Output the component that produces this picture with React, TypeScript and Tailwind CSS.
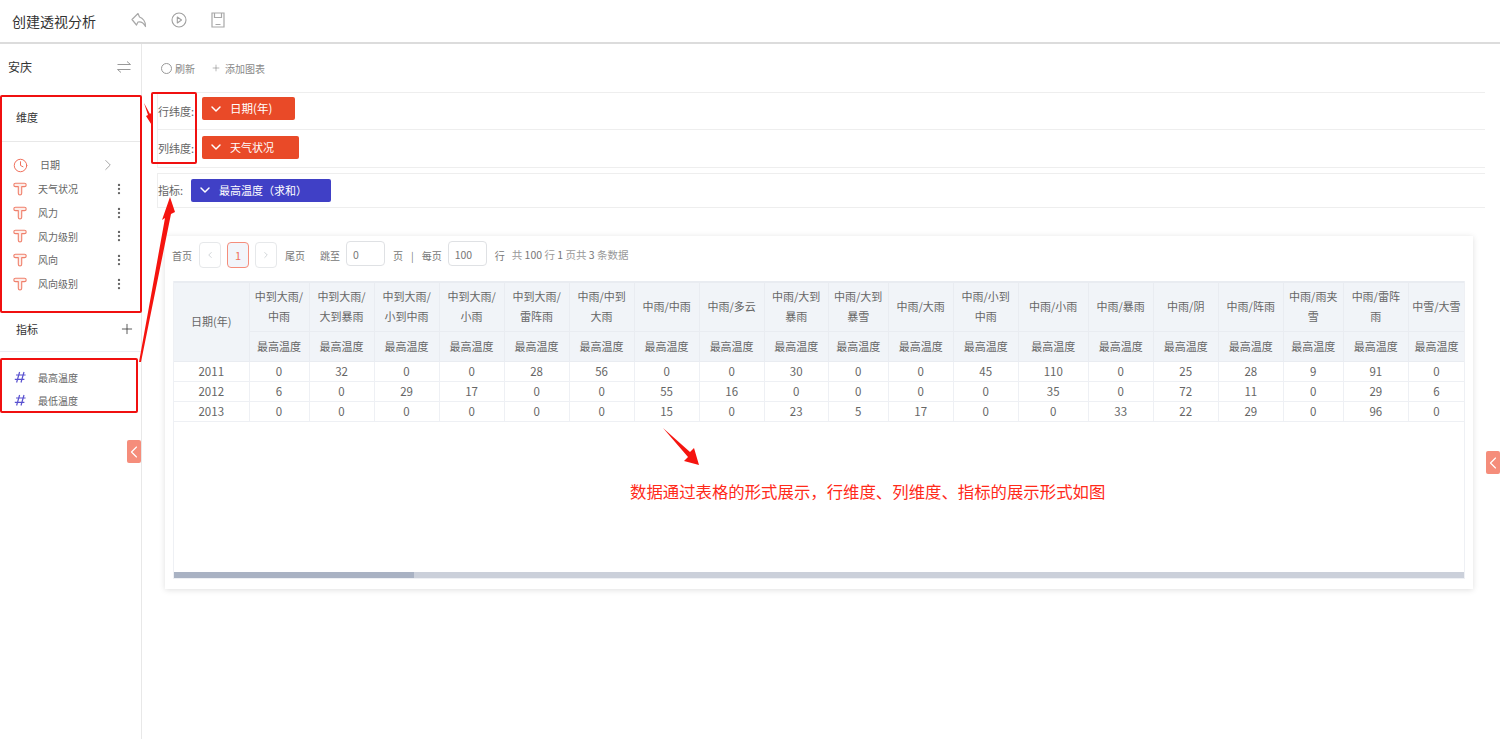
import React from 'react';
import { ChevronDown, ChevronLeft, ChevronRight, Clock, EllipsisVertical, Plus } from 'lucide-react';

const columns = [
    { name: ['中到大雨/', '中雨'], w: 60, v: [0, 6, 0] },
    { name: ['中到大雨/', '大到暴雨'], w: 65, v: [32, 0, 0] },
    { name: ['中到大雨/', '小到中雨'], w: 65, v: [0, 29, 0] },
    { name: ['中到大雨/', '小雨'], w: 65, v: [0, 17, 0] },
    { name: ['中到大雨/', '雷阵雨'], w: 65, v: [28, 0, 0] },
    { name: ['中雨/中到', '大雨'], w: 65, v: [56, 0, 0] },
    { name: ['中雨/中雨'], w: 65, v: [0, 55, 15] },
    { name: ['中雨/多云'], w: 65, v: [0, 16, 0] },
    { name: ['中雨/大到', '暴雨'], w: 64, v: [30, 0, 23] },
    { name: ['中雨/大到', '暴雪'], w: 60, v: [0, 0, 5] },
    { name: ['中雨/大雨'], w: 65, v: [0, 0, 17] },
    { name: ['中雨/小到', '中雨'], w: 65, v: [45, 0, 0] },
    { name: ['中雨/小雨'], w: 70, v: [110, 35, 0] },
    { name: ['中雨/暴雨'], w: 65, v: [0, 0, 33] },
    { name: ['中雨/阴'], w: 65, v: [25, 72, 22] },
    { name: ['中雨/阵雨'], w: 65, v: [28, 11, 29] },
    { name: ['中雨/雨夹', '雪'], w: 60, v: [9, 0, 0] },
    { name: ['中雨/雷阵', '雨'], w: 65, v: [91, 29, 96] },
    { name: ['中雪/大雪'], w: 56, v: [0, 6, 0] },
];

const dimensions = ['天气状况', '风力', '风力级别', '风向', '风向级别'];

const TextIcon = () => (
    <svg width="14" height="14" viewBox="0 0 14 14" fill="#fdeeea" stroke="#f0806c" strokeWidth="1.1" strokeLinejoin="round" className="shrink-0">
        <path d="M2.5 1.2 H11.5 A1.7 1.7 0 0 1 11.5 4.6 H8.7 V11.3 A1.7 1.7 0 0 1 5.3 11.3 V4.6 H2.5 A1.7 1.7 0 0 1 2.5 1.2 Z" />
    </svg>
);

const HashIcon = () => (
    <svg width="14" height="14" viewBox="0 0 14 14" fill="none" stroke="#5a52d0" strokeWidth="1.2" className="shrink-0">
        <path d="M6.6 2 L3.6 12.5 M11 2 L8 12.5 M3 5 H12.6 M1.8 9.3 H11.4" />
    </svg>
);

const Handle = ({ className }: { className: string }) => (
    <div className={`absolute w-[14px] h-[23px] bg-[#f58d7b] rounded-[2px] flex items-center justify-center ${className}`}>
        <ChevronLeft size={20} strokeWidth={1.4} className="text-white shrink-0" />
    </div>
);

const Tag = ({ label, color, width, size }: { label: string; color: string; width: string; size: string }) => (
    <div className={`h-[23px] rounded-[2px] flex items-center text-white ${size} ${color} ${width}`}>
        <ChevronDown size={16} strokeWidth={2.2} className="ml-[6px] mr-[6px] shrink-0" />
        <span>{label}</span>
    </div>
);

const PageButton = ({ children, active }: { children: React.ReactNode; active?: boolean }) => (
    <div className={`w-[22px] h-[26px] rounded-[4px] border flex items-center justify-center text-[11px] ${active ? 'border-[#f58d7b] bg-[#f2f5fa] text-[#f0705c]' : 'border-[#e6e8ea] text-[#c8ccd0]'}`}>
        {children}
    </div>
);

export default function App() {
    return (
        <div className="relative w-[1500px] h-[739px] overflow-hidden bg-white text-[#666] text-[10px]" style={{ fontFamily: '"Noto Sans CJK SC", "Noto Sans", sans-serif' }}>
            <header className="h-[44px] border-b-2 border-[#dcdcdc] flex items-center pl-[12px]">
                <h1 className="text-[14px] font-normal text-[#333] w-[119px]">创建透视分析</h1>
                <svg width="16" height="16" viewBox="0 0 16 16" fill="none" stroke="#a8a8a8" strokeWidth="1.2" strokeLinejoin="round" className="mb-[2px]">
                    <path d="M7 1.5 L1 7.5 L5.5 13 L7 10 C10 9.5 12.5 10.5 14.5 14.5 C15 9.5 11.5 6 8.5 5 Z" />
                </svg>
                <svg width="16" height="16" viewBox="0 0 16 16" fill="none" stroke="#a0a0a0" strokeWidth="1.1" strokeLinejoin="round" className="ml-[24px] mb-[2px]">
                    <circle cx="8" cy="8" r="7" />
                    <path d="M6.3 5 L10.5 8 L6.3 11 Z" />
                </svg>
                <svg width="14" height="16" viewBox="0 0 14 16" fill="none" stroke="#a8a8a8" strokeWidth="1.2" className="ml-[24px] mb-[2px]">
                    <path d="M1 1 H13 V15 H1 Z M3.5 1 V5.5 H10.5 V1 M4.5 12.5 H9.5" />
                </svg>
            </header>

            <div className="flex h-[695px]">
                <aside className="relative w-[142px] shrink-0 border-r border-[#e8e8e8]">
                    <div className="h-[46px] flex items-center justify-between pl-[8px] pr-[10px] text-[12px] text-[#333]">
                        <span>安庆</span>
                        <svg width="14" height="12" viewBox="0 0 14 12" fill="none" stroke="#999" strokeWidth="1">
                            <path d="M0.5 3.5 H13.5 L10 0.5 M13.5 8.5 H0.5 L4 11.5" />
                        </svg>
                    </div>
                    <div className="h-[8px]" />
                    <div className="h-[44px] flex items-center pl-[16px] pb-[4px] border-b border-[#e8e8e8] text-[11px] text-[#333]">维度</div>
                    <div className="h-[11px]" />
                    <div className="h-[24px] flex items-center pl-[13px] pr-[24px]">
                        <Clock size={15} strokeWidth={1.6} className="text-[#f0705c]" />
                        <span className="ml-[12px] flex-1 pb-[1px]">日期</span>
                        <ChevronRight size={18} strokeWidth={1} className="text-[#888]" />
                    </div>
                    {dimensions.map(d => (
                        <div key={d} className="h-[23.7px] flex items-center pl-[13px] pr-[15px]">
                            <TextIcon />
                            <span className="ml-[11px] flex-1">{d}</span>
                            <EllipsisVertical size={14} strokeWidth={2} className="text-[#666]" />
                        </div>
                    ))}
                    <div className="mt-[21.5px] h-[24px] flex items-center justify-between pl-[16px] pr-[6px] text-[11px] text-[#333]">
                        <span>指标</span>
                        <Plus size={16} strokeWidth={1.2} className="text-[#333]" />
                    </div>
                    <div className="mt-[10px] border-b border-[#ececf2]" />
                    <div className="h-[14px]" />
                    {['最高温度', '最低温度'].map(m => (
                        <div key={m} className="h-[23px] flex items-center pl-[13px]">
                            <HashIcon />
                            <span className="ml-[11px]">{m}</span>
                        </div>
                    ))}
                    <Handle className="left-[127px] top-[396px]" />
                </aside>

                <main className="relative flex-1 pl-[15px] pr-[15px]">
                    <div className="h-[48px] flex items-center pl-[4px] text-[#888]">
                        <div className="w-[11px] h-[11px] rounded-full border border-[#999]" />
                        <span className="ml-[3px]">刷新</span>
                        <Plus size={10} strokeWidth={1} className="ml-[16px] text-[#555]" />
                        <span className="ml-[4px]">添加图表</span>
                    </div>
                    <div className="h-[38px] border border-[#eeeeee] border-r-0 flex items-center">
                        <span className="w-[44px] text-[#666] text-[11px] whitespace-nowrap">行纬度:</span>
                        <div className="mb-[5px]"><Tag label="日期(年)" size="text-[11.5px]" color="bg-[#e94a28]" width="w-[93px]" /></div>
                    </div>
                    <div className="h-[38px] border border-[#eeeeee] border-t-0 border-r-0 flex items-center">
                        <span className="w-[44px] text-[#666] text-[11px] whitespace-nowrap">列纬度:</span>
                        <div className="mb-[3px]"><Tag label="天气状况" size="text-[11px]" color="bg-[#e94a28]" width="w-[97px]" /></div>
                    </div>
                    <div className="h-[35px] mt-[5px] border border-[#eeeeee] border-r-0 flex items-center">
                        <span className="w-[33px] text-[#666] text-[11px] whitespace-nowrap">指标:</span>
                        <div className="mb-[1px]"><Tag label="最高温度（求和）" size="text-[11px]" color="bg-[#4040c6]" width="w-[140px]" /></div>
                    </div>

                    <section className="mt-[28px] ml-[8px] w-[1308px] h-[353px] bg-white shadow-[0_1px_6px_rgba(0,0,0,0.13)] pl-[7px] pt-[6px]">
                        <div className="h-[26px] flex items-center text-[#777] whitespace-nowrap">
                            <span>首页</span>
                            <div className="ml-[7px]"><PageButton><ChevronLeft size={10} /></PageButton></div>
                            <div className="ml-[6px]"><PageButton active>1</PageButton></div>
                            <div className="ml-[6px]"><PageButton><ChevronRight size={10} /></PageButton></div>
                            <span className="ml-[8px]">尾页</span>
                            <span className="ml-[15px]">跳至</span>
                            <div className="ml-[6px] -mt-[3px] w-[39px] h-[25px] border border-[#dfe1e4] rounded-[4px] flex items-center pl-[6px] pt-[2px] text-[10.5px]">0</div>
                            <span className="ml-[8px]">页</span>
                            <span className="ml-[8px]">|</span>
                            <span className="ml-[8px]">每页</span>
                            <div className="ml-[6px] -mt-[3px] w-[39px] h-[25px] border border-[#dfe1e4] rounded-[4px] flex items-center pl-[6px] pt-[2px] text-[10.5px]">100</div>
                            <span className="ml-[8px]">行</span>
                            <span className="ml-[7px] text-[#999] text-[10.5px]">共 <b className="font-normal text-[#777]">100</b> 行 <b className="font-normal text-[#777]">1</b> 页共 <b className="font-normal text-[#777]">3</b> 条数据</span>
                        </div>

                        <div className="relative mt-[13px] w-[1292px] h-[298px] ml-[1px] border-x border-[#eef0f4] border-b overflow-hidden">
                            <table className="table-fixed border-collapse text-[11px] text-center w-[1291px]">
                                <colgroup>
                                    <col className="w-[75px]" />
                                    {columns.map((c, i) => <col key={i} style={{ width: c.w }} />)}
                                </colgroup>
                                <thead className="bg-[#f1f4f8] text-[#666]">
                                    <tr className="h-[49px]">
                                        <th rowSpan={2} className="font-normal pb-[2px] border-t-2 border-b border-r border-[#e9ecf1]">日期(年)</th>
                                        {columns.map((c, i) => (
                                            <th key={i} className="font-normal leading-[20px] px-0 pb-[2px] border-t-2 border-r border-b border-[#e9ecf1] whitespace-nowrap">
                                                {c.name.map(n => <div key={n}>{n}</div>)}
                                            </th>
                                        ))}
                                    </tr>
                                    <tr className="h-[30px]">
                                        {columns.map((c, i) => (
                                            <th key={i} className="font-normal border-b border-r border-[#e9ecf1] whitespace-nowrap">最高温度</th>
                                        ))}
                                    </tr>
                                </thead>
                                <tbody className="text-[#666] text-[11.5px]">
                                    {['2011', '2012', '2013'].map((year, r) => (
                                        <tr key={year} className="h-[20px]">
                                            <td className="border-b border-r border-[#eef0f4] p-0 leading-[19px]">{year}</td>
                                            {columns.map((c, i) => (
                                                <td key={i} className="border-b border-r border-[#eef0f4] p-0 leading-[19px]">{c.v[r]}</td>
                                            ))}
                                        </tr>
                                    ))}
                                </tbody>
                            </table>
                            <div className="absolute left-0 right-0 bottom-0 h-[6px] bg-[#cbd0da]">
                                <div className="h-full w-[240px] bg-[#a9b2c3]" />
                            </div>
                        </div>
                    </section>
                    <Handle className="left-[1344px] top-[407px]" />
                </main>
            </div>

            {/* red annotations drawn over the screenshot */}
            <div className="absolute left-0 top-[95px] w-[142px] h-[218px] border-2 border-[#f01010] rounded-[2px]" />
            <div className="absolute left-0 top-[358px] w-[138px] h-[55px] border-2 border-[#f01010] rounded-[2px]" />
            <div className="absolute left-[151px] top-[92px] w-[46px] h-[72px] border-2 border-[#f01010] rounded-[2px]" />
            <svg className="absolute left-0 top-0 pointer-events-none" width="1500" height="739" fill="#f5140f">
                <path d="M144 103 L150 114 L152 112 L153 127 L146 116 L148 115 Z" />
                <path d="M139 362 L165 218 L162 220 L170 197 L175 212 L171 214 L141 362 Z" />
                <path d="M663 428 L690 452 L694 448 L699 465 L684 461 L688 457 Z" />
            </svg>
            <div className="absolute left-[630px] top-[478px] text-[16.4px] leading-[26px] text-[#ff2a1a] whitespace-nowrap">数据通过表格的形式展示，行维度、列维度、指标的展示形式如图</div>
        </div>
    );
}
